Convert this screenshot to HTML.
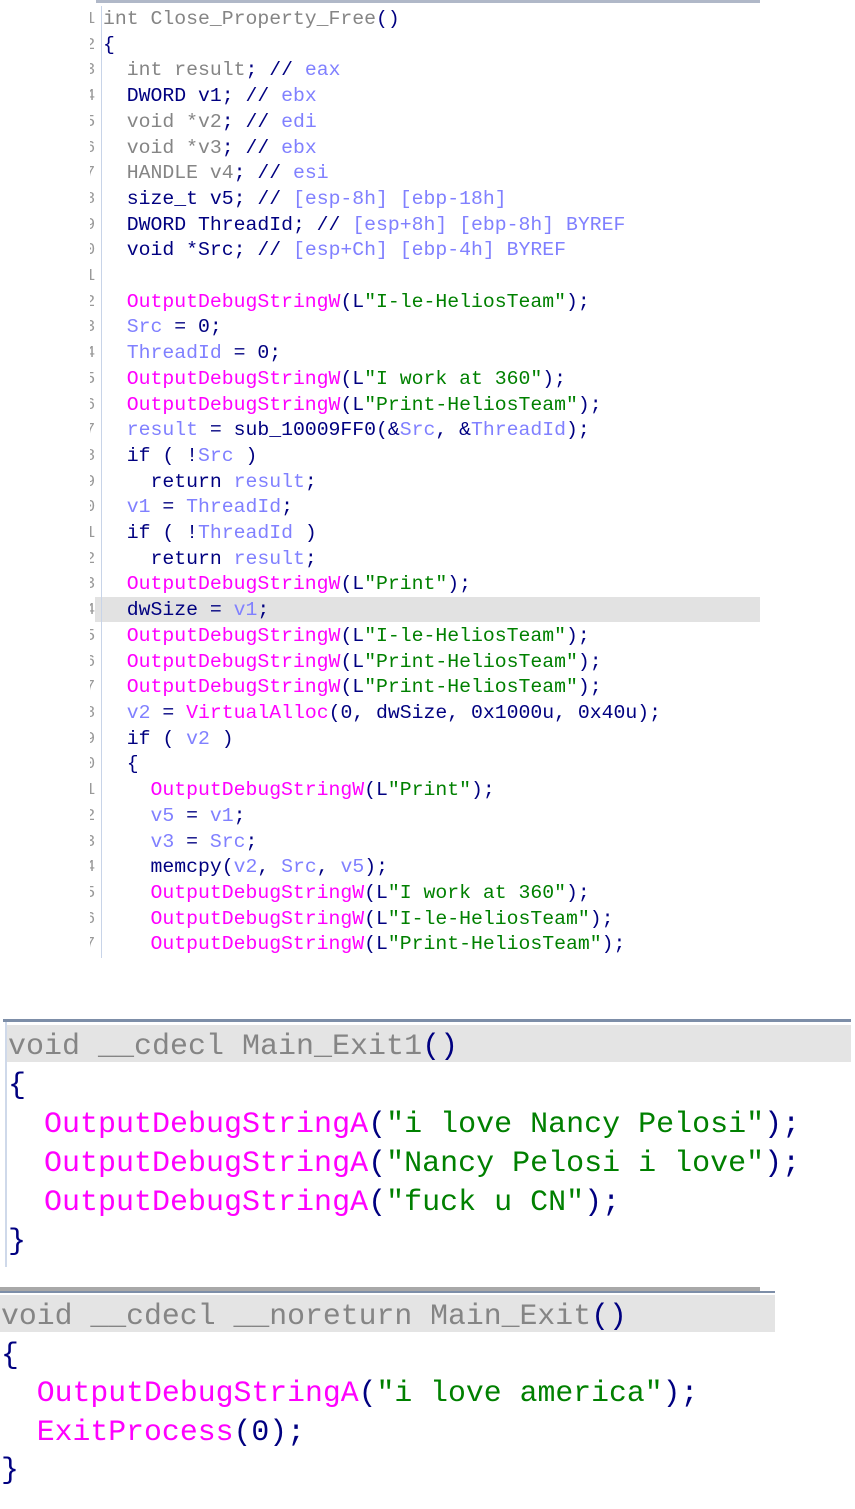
<!DOCTYPE html>
<html><head><meta charset="utf-8"><style>
html,body{margin:0;padding:0;background:#fff;width:855px;height:1509px;overflow:hidden;position:relative}
.m{font-family:"Liberation Mono",monospace;white-space:pre;position:absolute}
.k{color:#858585}.n{color:#000080}.f{color:#ff00ff}.s{color:#008000}.l{color:#8080ff}.p{color:#000080}
#top{left:103px;top:7px;font-size:19.8px;line-height:25.7px}
#gut{position:absolute;left:101px;top:6px;width:1px;height:952px;background:#c8d4e8}
.numw{position:absolute;left:90px;top:0;width:8px;height:960px;overflow:hidden}
.num{position:absolute;left:-5px;font-family:"Liberation Mono",monospace;font-size:17px;color:#999;line-height:25.7px;top:7px;white-space:pre}
</style></head><body>
<div style="position:absolute;left:96px;top:0;width:664px;height:3px;background:#b0b8c8"></div>
<div style="position:absolute;left:95px;top:597px;width:665px;height:25px;background:#e2e2e2"></div>
<div id="gut"></div>
<div class="numw"><div class="num">1
2
3
4
5
6
7
8
9
0
1
2
3
4
5
6
7
8
9
0
1
2
3
4
5
6
7
8
9
0
1
2
3
4
5
6
7</div></div>
<div class="m" id="top"><span class="k">int Close_Property_Free</span><span class="p">()</span>
<span class="p">{</span>
  <span class="k">int result</span><span class="p">; //</span> <span class="l">eax</span>
  <span class="n">DWORD v1; //</span> <span class="l">ebx</span>
  <span class="k">void *v2</span><span class="p">; //</span> <span class="l">edi</span>
  <span class="k">void *v3</span><span class="p">; //</span> <span class="l">ebx</span>
  <span class="k">HANDLE v4</span><span class="p">; //</span> <span class="l">esi</span>
  <span class="n">size_t v5; //</span> <span class="l">[esp-8h] [ebp-18h]</span>
  <span class="n">DWORD ThreadId; //</span> <span class="l">[esp+8h] [ebp-8h] BYREF</span>
  <span class="n">void *Src; //</span> <span class="l">[esp+Ch] [ebp-4h] BYREF</span>

  <span class="f">OutputDebugStringW</span><span class="p">(L</span><span class="s">"I-le-HeliosTeam"</span><span class="p">);</span>
  <span class="l">Src</span><span class="p"> = 0;</span>
  <span class="l">ThreadId</span><span class="p"> = 0;</span>
  <span class="f">OutputDebugStringW</span><span class="p">(L</span><span class="s">"I work at 360"</span><span class="p">);</span>
  <span class="f">OutputDebugStringW</span><span class="p">(L</span><span class="s">"Print-HeliosTeam"</span><span class="p">);</span>
  <span class="l">result</span><span class="p"> = sub_10009FF0(&amp;</span><span class="l">Src</span><span class="p">, &amp;</span><span class="l">ThreadId</span><span class="p">);</span>
  <span class="p">if ( !</span><span class="l">Src</span><span class="p"> )</span>
    <span class="p">return </span><span class="l">result</span><span class="p">;</span>
  <span class="l">v1</span><span class="p"> = </span><span class="l">ThreadId</span><span class="p">;</span>
  <span class="p">if ( !</span><span class="l">ThreadId</span><span class="p"> )</span>
    <span class="p">return </span><span class="l">result</span><span class="p">;</span>
  <span class="f">OutputDebugStringW</span><span class="p">(L</span><span class="s">"Print"</span><span class="p">);</span>
  <span class="p">dwSize = </span><span class="l">v1</span><span class="p">;</span>
  <span class="f">OutputDebugStringW</span><span class="p">(L</span><span class="s">"I-le-HeliosTeam"</span><span class="p">);</span>
  <span class="f">OutputDebugStringW</span><span class="p">(L</span><span class="s">"Print-HeliosTeam"</span><span class="p">);</span>
  <span class="f">OutputDebugStringW</span><span class="p">(L</span><span class="s">"Print-HeliosTeam"</span><span class="p">);</span>
  <span class="l">v2</span><span class="p"> = </span><span class="f">VirtualAlloc</span><span class="p">(0, dwSize, 0x1000u, 0x40u);</span>
  <span class="p">if ( </span><span class="l">v2</span><span class="p"> )</span>
  <span class="p">{</span>
    <span class="f">OutputDebugStringW</span><span class="p">(L</span><span class="s">"Print"</span><span class="p">);</span>
    <span class="l">v5</span><span class="p"> = </span><span class="l">v1</span><span class="p">;</span>
    <span class="l">v3</span><span class="p"> = </span><span class="l">Src</span><span class="p">;</span>
    <span class="p">memcpy(</span><span class="l">v2</span><span class="p">, </span><span class="l">Src</span><span class="p">, </span><span class="l">v5</span><span class="p">);</span>
    <span class="f">OutputDebugStringW</span><span class="p">(L</span><span class="s">"I work at 360"</span><span class="p">);</span>
    <span class="f">OutputDebugStringW</span><span class="p">(L</span><span class="s">"I-le-HeliosTeam"</span><span class="p">);</span>
    <span class="f">OutputDebugStringW</span><span class="p">(L</span><span class="s">"Print-HeliosTeam"</span><span class="p">);</span></div>

<!-- Section 2 -->
<div style="position:absolute;left:3px;top:1019px;width:848px;height:3px;background:#7d8ea8"></div>
<div style="position:absolute;left:6px;top:1025px;width:845px;height:37px;background:#e4e4e4"></div>
<div style="position:absolute;left:5px;top:1022px;width:2px;height:245px;background:#cfd9ea"></div>
<div class="m" style="left:8px;top:1028px;font-size:30px;line-height:39px"><span class="k">void __cdecl Main_Exit1</span><span class="p">()</span>
<span class="p">{</span>
  <span class="f">OutputDebugStringA</span><span class="p">(</span><span class="s">"i love Nancy Pelosi"</span><span class="p">);</span>
  <span class="f">OutputDebugStringA</span><span class="p">(</span><span class="s">"Nancy Pelosi i love"</span><span class="p">);</span>
  <span class="f">OutputDebugStringA</span><span class="p">(</span><span class="s">"fuck u CN"</span><span class="p">);</span>
<span class="p">}</span></div>
<div style="position:absolute;left:0;top:1273px;width:855px;height:6px;background:#fff"></div>

<!-- Section 3 -->
<div style="position:absolute;left:0;top:1287px;width:760px;height:4px;background:#a8a8a8"></div>
<div style="position:absolute;left:0;top:1291px;width:775px;height:2px;background:#7d8ea8"></div>
<div style="position:absolute;left:0;top:1295px;width:775px;height:37px;background:#e4e4e4"></div>
<div class="m" style="left:1px;top:1297px;font-size:29.8px;line-height:38.5px"><span class="k">void __cdecl __noreturn Main_Exit</span><span class="p">()</span>
<span class="p">{</span>
  <span class="f">OutputDebugStringA</span><span class="p">(</span><span class="s">"i love america"</span><span class="p">);</span>
  <span class="f">ExitProcess</span><span class="p">(0);</span>
<span class="p">}</span></div>
</body></html>
